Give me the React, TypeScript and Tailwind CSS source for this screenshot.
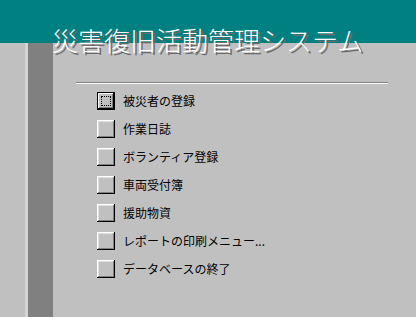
import React from "react";

const items = [
  "被災者の登録",
  "作業日誌",
  "ボランティア登録",
  "車両受付簿",
  "援助物資",
  "レポートの印刷メニュー...",
  "データベースの終了",
];

export default function App() {
  return (
    <div
      className="relative w-[416px] h-[317px] overflow-hidden bg-[#c0c0c0] flex flex-col"
      style={{ fontFamily: '"Noto Sans CJK JP", "Noto Sans", sans-serif' }}
    >
      <div className="h-[43px] bg-[#008080] shrink-0" />
      <div className="flex flex-1">
        <div className="w-[25px] shrink-0" />
        <div className="w-[3px] bg-[#d4d4d4] shrink-0" />
        <div className="w-[25px] bg-[#808080] shrink-0" />
        <div className="flex-1 flex flex-col">
          <div className="mt-[39px] ml-[23px] w-[312px] h-[2px] border-t border-[#808080] border-b border-b-white" />
          <div className="flex flex-col mt-[3px] pl-[44px]">
            {items.map((t, i) => (
              <div key={t} className="h-[28px] flex items-center gap-[8px]">
                {i === 0 ? (
                  <div className="w-[18px] h-[18px] border border-black shadow-[inset_-1px_-1px_#000,inset_1px_1px_#fff,inset_-2px_-2px_#808080] flex items-center justify-center">
                    <div className="w-[10px] h-[10px] border border-dotted border-black" />
                  </div>
                ) : (
                  <div className="w-[18px] h-[18px] shadow-[inset_-1px_-1px_#000,inset_1px_1px_#fff,inset_-2px_-2px_#808080,inset_2px_2px_#dfdfdf]" />
                )}
                <span className="text-[12px] leading-none text-black">{t}</span>
              </div>
            ))}
          </div>
        </div>
      </div>
      <div className="absolute left-[52px] top-[27px] text-[26px] font-light leading-none text-white [text-shadow:2px_2px_0_#6a6a6a] whitespace-nowrap">
        災害復旧活動管理システム
      </div>
    </div>
  );
}
